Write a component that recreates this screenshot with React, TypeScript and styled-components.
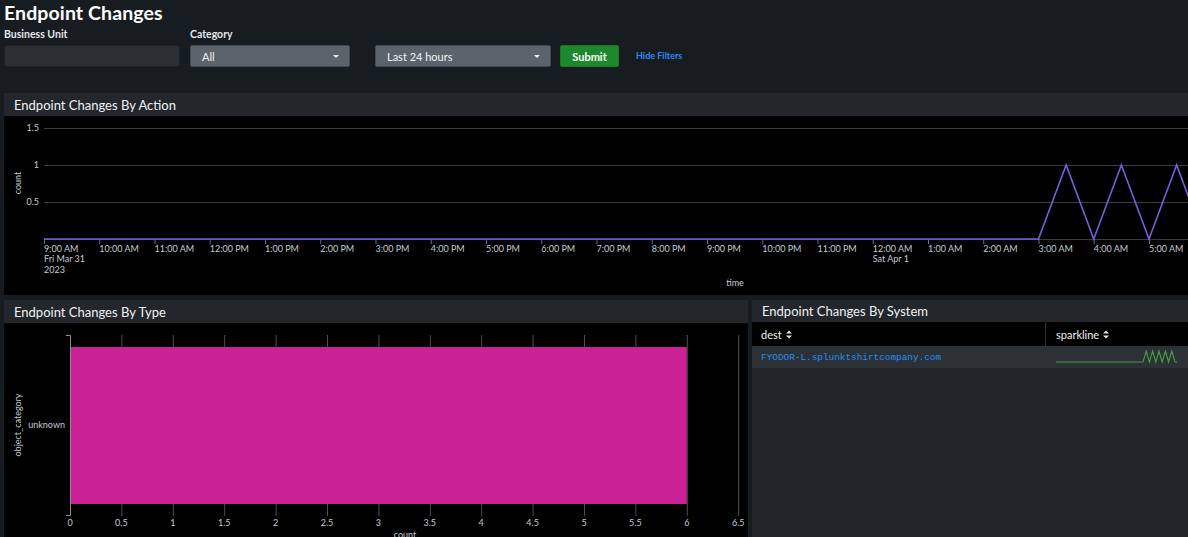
import React from "react";
import styled, { createGlobalStyle } from "styled-components";

const Global = createGlobalStyle`
  html, body { margin: 0; padding: 0; background: #171c20; }
  body { font-family: Lato, "Open Sans", "Liberation Sans", sans-serif; color: #e1e6eb; overflow: hidden; }
  * { box-sizing: border-box; }
`;

const Page = styled.div`
  width: 1188px;
  height: 537px;
  padding-left: 4px;
  display: flex;
  flex-direction: column;
  overflow: hidden;
`;

const Title = styled.h1`
  margin: 0;
  height: 27px;
  font-size: 19.5px;
  line-height: 25px;
  font-weight: 700;
  color: #ffffff;
  letter-spacing: 0.1px;
`;

const Filters = styled.div`
  display: flex;
  align-items: flex-end;
  height: 40px;
`;

const Field = styled.div<{ $w: number; $mr: number }>`
  display: flex;
  flex-direction: column;
  width: ${(p) => p.$w}px;
  margin-right: ${(p) => p.$mr}px;
`;

const Label = styled.div`
  font-size: 10.5px;
  font-weight: 700;
  color: #e1e6eb;
  height: 18px;
  line-height: 14px;
`;

const TextInput = styled.div`
  height: 22px;
  background: #2a3034;
  border: 1px solid #1e2326;
  border-radius: 2px;
`;

const Select = styled.div`
  height: 22px;
  background: #5b636d;
  border: 1px solid #444b54;
  border-radius: 2px;
  display: flex;
  align-items: center;
  justify-content: space-between;
  padding: 0 10px 0 11px;
  font-size: 11px;
  color: #f2f4f5;
`;

const Caret = styled.span`
  width: 0;
  height: 0;
  border-left: 3.5px solid transparent;
  border-right: 3.5px solid transparent;
  border-top: 3.5px solid #e8eaec;
`;

const SubmitButton = styled.div`
  width: 59px;
  height: 22px;
  margin-right: 17px;
  background: #1c8a2c;
  border: 1px solid #177524;
  border-radius: 2px;
  display: flex;
  align-items: center;
  justify-content: center;
  font-size: 11px;
  font-weight: 700;
  color: #ffffff;
`;

const LinkText = styled.div`
  height: 22px;
  line-height: 22px;
  font-size: 9px;
  font-weight: 700;
  color: #2a8bf2;
`;

const Panel = styled.div<{ $w?: number; $bg?: string }>`
  display: flex;
  flex-direction: column;
  width: ${(p) => (p.$w ? `${p.$w}px` : "auto")};
  background: ${(p) => p.$bg || "#000"};
  overflow: hidden;
`;

const PanelHeader = styled.div<{ $h: number }>`
  height: ${(p) => p.$h}px;
  flex: none;
  background: #23272b;
  padding-left: 10px;
  display: flex;
  align-items: center;
  font-size: 13px;
  color: #eef1f3;
`;

const TopPanel = styled(Panel)`
  margin-top: 26px;
  height: 202px;
`;

const Row = styled.div`
  display: flex;
  gap: 4px;
  margin-top: 5px;
  flex: 1;
  min-height: 0;
`;

const ChartBody = styled.div`
  flex: 1;
  background: #000;
  margin-top: 1px;
`;

const Table = styled.div`
  display: flex;
  flex-direction: column;
`;

const HeadRow = styled.div`
  display: grid;
  grid-template-columns: 293px 1fr;
  height: 24px;
  background: #000;
`;

const HeadCell = styled.div<{ $divider?: boolean }>`
  display: flex;
  align-items: center;
  gap: 4px;
  padding-left: ${(p) => (p.$divider ? 10 : 9)}px;
  font-size: 11px;
  color: #eef1f3;
  border-left: ${(p) => (p.$divider ? "1px solid #2c3136" : "none")};
`;

const BodyRow = styled.div`
  display: grid;
  grid-template-columns: 293px 1fr;
  height: 22px;
  background: #2b3135;
`;

const Cell = styled.div<{ $pl?: number }>`
  display: flex;
  align-items: center;
  padding-left: ${(p) => p.$pl ?? 9}px;
`;

const MonoLink = styled.span`
  font-family: "Liberation Mono", "DejaVu Sans Mono", monospace;
  font-size: 9.4px;
  color: #2a8bf2;
`;

const SortIcon = () => (
  <svg width="6" height="9" viewBox="0 0 6 9">
    <path d="M0 3.6 L3 0.4 L6 3.6 Z M0 5.4 L3 8.6 L6 5.4 Z" fill="#e1e6eb" />
  </svg>
);

const AXIS = "#c3cbd4";
const GRID = "#3a3d40";
const FS = "9";

const hours = [
  "9:00 AM", "10:00 AM", "11:00 AM", "12:00 PM", "1:00 PM", "2:00 PM", "3:00 PM",
  "4:00 PM", "5:00 PM", "6:00 PM", "7:00 PM", "8:00 PM", "9:00 PM", "10:00 PM",
  "11:00 PM", "12:00 AM", "1:00 AM", "2:00 AM", "3:00 AM", "4:00 AM", "5:00 AM",
];

const ActionChart = () => {
  const x0 = 40;
  const step = 55.25;
  const base = 122;
  const peak = 48;
  const tx = (i: number) => x0 + i * step;
  const pts: string[] = [`${x0},${base}`, `${tx(18)},${base}`];
  for (let k = 0; k < 3; k++) {
    pts.push(`${tx(18.5 + k)},${peak}`);
    pts.push(`${tx(19 + k)},${base}`);
  }
  return (
    <svg width="1184" height="178" viewBox="0 0 1184 178">
      {[11, 48, 85].map((y) => (
        <line key={y} x1={x0} x2={1184} y1={y + 0.5} y2={y + 0.5} stroke={GRID} strokeWidth="1" />
      ))}
      <line x1={x0} x2={1184} y1={base + 0.5} y2={base + 0.5} stroke={GRID} strokeWidth="1" />
      {[["1.5", 11], ["1", 48], ["0.5", 85]].map(([t, y]) => (
        <text key={t} x={35} y={(y as number) + 3} fontSize={FS} fill={AXIS} textAnchor="end" fontFamily="Lato, sans-serif">
          {t}
        </text>
      ))}
      <text transform="translate(17 66) rotate(-90)" fontSize={FS} fill={AXIS} textAnchor="middle" fontFamily="Lato, sans-serif">
        count
      </text>
      {hours.map((h, i) => (
        <g key={h + i}>
          <line x1={tx(i) + 0.5} x2={tx(i) + 0.5} y1={base} y2={base + 5} stroke="#6a6f74" strokeWidth="1" />
          <text x={tx(i)} y={135} fontSize={FS} fill={AXIS} fontFamily="Lato, sans-serif">
            {h}
          </text>
        </g>
      ))}
      <text x={tx(0)} y={145} fontSize={FS} fill={AXIS} fontFamily="Lato, sans-serif">Fri Mar 31</text>
      <text x={tx(0)} y={156} fontSize={FS} fill={AXIS} fontFamily="Lato, sans-serif">2023</text>
      <text x={tx(15)} y={145} fontSize={FS} fill={AXIS} fontFamily="Lato, sans-serif">Sat Apr 1</text>
      <text x={731} y={169} fontSize={FS} fill={AXIS} textAnchor="middle" fontFamily="Lato, sans-serif">time</text>
      <polyline points={pts.join(" ")} fill="none" stroke="#7c5ce0" strokeWidth="1.6" strokeLinejoin="miter" />
    </svg>
  );
};

const TypeChart = () => {
  const x0 = 66;
  const step = 51.4;
  const tx = (i: number) => x0 + i * step;
  const ticks = ["0", "0.5", "1", "1.5", "2", "2.5", "3", "3.5", "4", "4.5", "5", "5.5", "6", "6.5"];
  return (
    <svg width="744" height="213" viewBox="0 0 744 213">
      {ticks.map((t, i) =>
        i === 0 ? null : (
          <line key={t} x1={tx(i) + 0.5} x2={tx(i) + 0.5} y1={11} y2={192} stroke="#4a4d50" strokeWidth="1" />
        )
      )}
      <rect x={tx(0)} y={23} width={tx(12) - tx(0)} height={157} fill="#cb2196" />
      <path d={`M${x0 - 4} 11.5 H${x0 + 0.5} V191.5 H${x0 - 4}`} fill="none" stroke="#8a8f94" strokeWidth="1" />
      {ticks.map((t, i) => (
        <text key={t} x={tx(i)} y={202} fontSize={FS} fill={AXIS} textAnchor="middle" fontFamily="Lato, sans-serif">
          {t}
        </text>
      ))}
      <text x={61} y={104} fontSize={FS} fill={AXIS} textAnchor="end" fontFamily="Lato, sans-serif">unknown</text>
      <text transform="translate(17 101) rotate(-90)" fontSize={FS} fill={AXIS} textAnchor="middle" fontFamily="Lato, sans-serif">
        object_category
      </text>
      <text x={401} y={214} fontSize={FS} fill={AXIS} textAnchor="middle" fontFamily="Lato, sans-serif">count</text>
    </svg>
  );
};

const Sparkline = () => {
  const pts: string[] = ["0,13", "87,13"];
  let x = 87;
  for (let k = 0; k < 5; k++) {
    pts.push(`${x + 3.2},2`);
    pts.push(`${x + 6.4},13`);
    x += 6.4;
  }
  pts.push(`${x + 2},13`);
  return (
    <svg width="124" height="16" viewBox="0 0 124 16">
      <polyline points={pts.join(" ")} fill="none" stroke="#4f9a48" strokeWidth="1.1" />
    </svg>
  );
};

export default function App() {
  return (
    <>
      <Global />
      <Page>
        <Title>Endpoint Changes</Title>
        <Filters>
          <Field $w={176} $mr={10}>
            <Label>Business Unit</Label>
            <TextInput />
          </Field>
          <Field $w={160} $mr={25}>
            <Label>Category</Label>
            <Select>
              <span>All</span>
              <Caret />
            </Select>
          </Field>
          <Field $w={176} $mr={9}>
            <Select>
              <span>Last 24 hours</span>
              <Caret />
            </Select>
          </Field>
          <SubmitButton>Submit</SubmitButton>
          <LinkText>Hide Filters</LinkText>
        </Filters>
        <TopPanel>
          <PanelHeader $h={23}>Endpoint Changes By Action</PanelHeader>
          <ChartBody>
            <ActionChart />
          </ChartBody>
        </TopPanel>
        <Row>
          <Panel $w={744}>
            <PanelHeader $h={23}>Endpoint Changes By Type</PanelHeader>
            <ChartBody>
              <TypeChart />
            </ChartBody>
          </Panel>
          <Panel $w={436} $bg="#212529">
            <PanelHeader $h={22}>Endpoint Changes By System</PanelHeader>
            <Table>
              <HeadRow>
                <HeadCell>
                  dest <SortIcon />
                </HeadCell>
                <HeadCell $divider>
                  sparkline <SortIcon />
                </HeadCell>
              </HeadRow>
              <BodyRow>
                <Cell>
                  <MonoLink>FYODOR-L.splunktshirtcompany.com</MonoLink>
                </Cell>
                <Cell $pl={11}>
                  <Sparkline />
                </Cell>
              </BodyRow>
            </Table>
          </Panel>
        </Row>
      </Page>
    </>
  );
}
